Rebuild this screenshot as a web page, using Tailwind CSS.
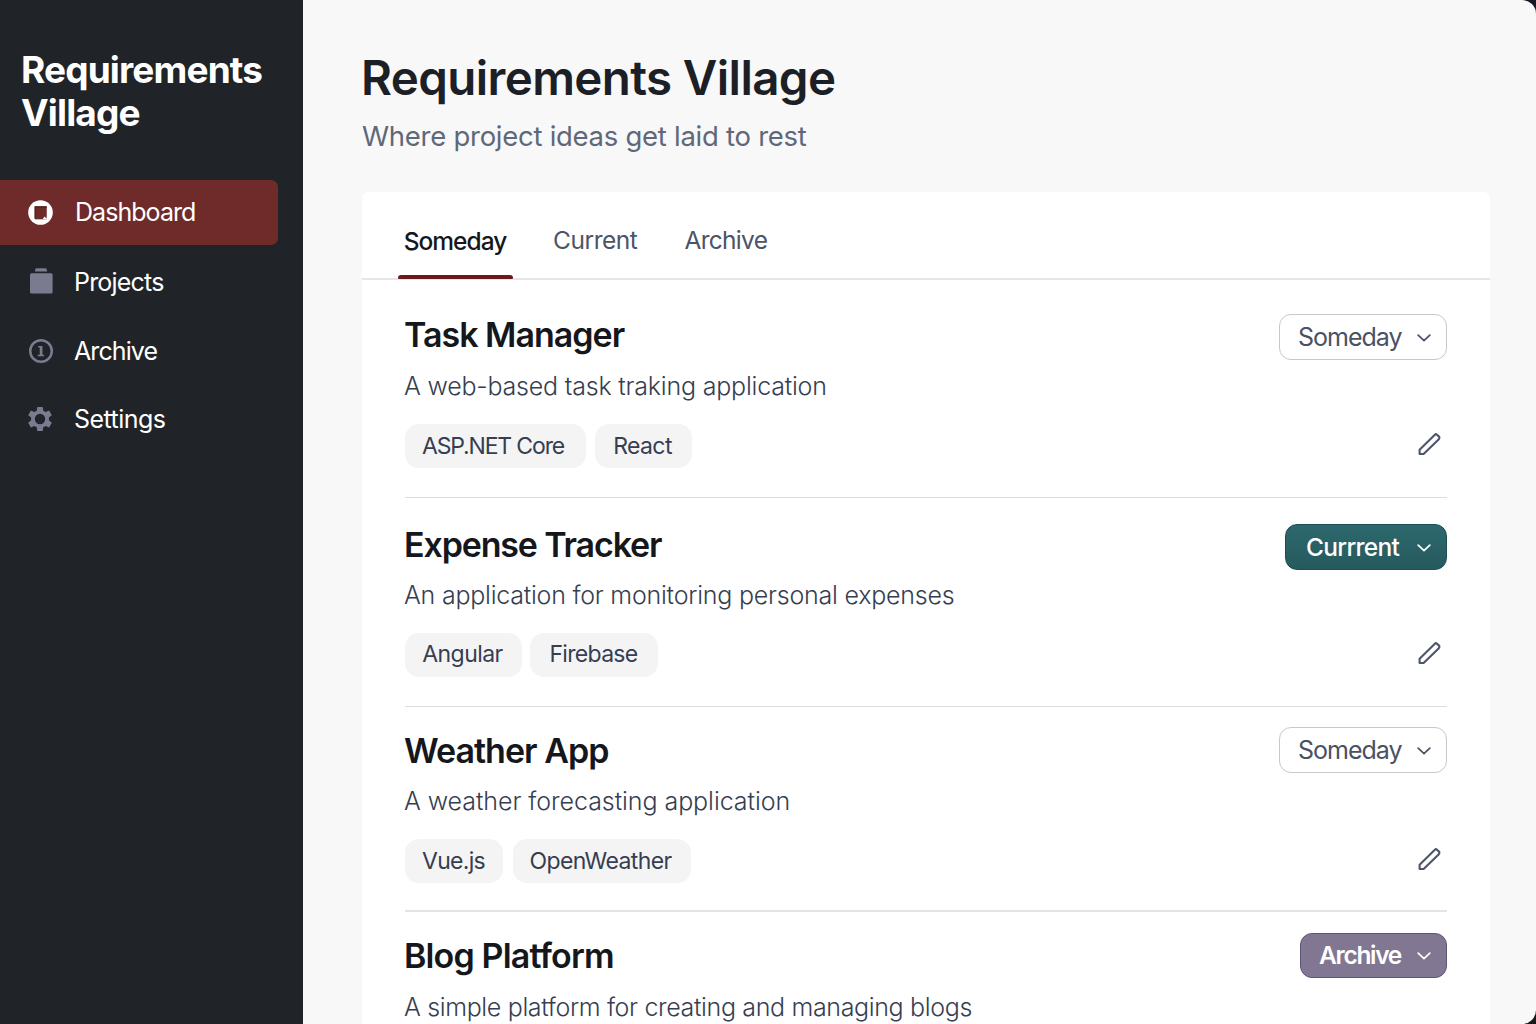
<!DOCTYPE html>
<html lang="en">
<head>
<meta charset="utf-8">
<title>Requirements Village</title>
<script src="https://cdn.jsdelivr.net/npm/@tailwindcss/browser@4"></script>
</head>
<body class="h-[1024px] w-[1536px] overflow-hidden bg-[#16191f] font-['Inter',sans-serif]">
<svg class="hidden">
  <symbol id="chevron" viewBox="0 0 14 8"><path d="M1.200 1.200 7 6.600l5.800-5.400" fill="none" stroke="currentColor" stroke-width="1.700" stroke-linecap="round" stroke-linejoin="round"/></symbol>
  <symbol id="pencil" viewBox="0 0 24 24"><path d="M2.600 22v-4.200L17.600 2.900l1.500-.9 3.200 2.900q.4 1.500-.7 2.600L6.600 22z" fill="none" stroke="currentColor" stroke-width="2.100" stroke-linejoin="round"/></symbol>
</svg>
<div class="flex h-full overflow-hidden">
  <aside class="flex h-full w-[303px] shrink-0 flex-col bg-[#202428] text-white">
    <div class="mt-[48px] ml-[21px] text-[37px] leading-[43px] font-[680] tracking-[-0.850px]">Requirements<br>Village</div>
    <nav class="mt-[46px] flex flex-col text-[25px]">
      <a class="flex h-[65px] w-[278px] items-center rounded-r-[7px] bg-[#6f2b2a] pl-[27px]">
        <svg class="mb-px ml-px size-[25px]" viewBox="0 0 26 26"><circle cx="13" cy="13" r="12.800" fill="#fff"/><path d="M7.300 6.700h12.200v13.400h-12.200z" fill="#6f2b2a"/><path d="M7.300 19.500V7.200h12.200" fill="none" stroke="#511a1b" stroke-width="1.200"/><path d="M15.800 20.100h3.700v-1.600h-1.500v-1.200h-1.200v1.200h-1z" fill="#fff"/></svg>
        <span class="ml-[22px] pt-px tracking-[-0.950px]">Dashboard</span>
      </a>
      <a class="mt-[2px] flex h-[70px] items-center pl-[27px]">
        <svg class="mb-[2px] size-[28px]" viewBox="0 0 28 28"><path d="M8 4.500V3.200q0-2 2-2h8q2 0 2 2v1.300z" fill="#7b7b8f"/><rect x="3" y="6.300" width="22.600" height="20.200" rx="1.500" fill="#7b7b8f"/></svg>
        <span class="ml-[19px] pt-[2px] tracking-[-0.800px]">Projects</span>
      </a>
      <a class="flex h-[68px] items-center pl-[27px]">
        <svg class="size-[28px]" viewBox="0 0 28 28" fill="none" stroke="#7b7b8f"><circle cx="14" cy="14" r="10.800" stroke-width="2.500"/><path d="M11.200 9.800h2.500M10.800 18.500h6.200" stroke-width="1.500"/><path d="M14.100 9v10" stroke-width="2.700"/></svg>
        <span class="ml-[19px] pt-[2px] tracking-[-0.900px]">Archive</span>
      </a>
      <a class="flex h-[68px] items-center pl-[27px]">
        <svg class="size-[26px]" viewBox="0 0 26 26"><path fill="#7b7b8f" fill-rule="evenodd" d="M10.300 1h5.400l.6 3.700 2.300 1.300 3.500-1.400 2.700 4.700-2.900 2.300v2.700l2.900 2.400-2.700 4.700-3.500-1.400-2.300 1.300-.6 3.700h-5.400l-.6-3.700-2.300-1.300-3.500 1.400-2.700-4.700 2.900-2.400v-2.700L1.200 9.300l2.700-4.700L7.400 6l2.300-1.300zM13 7.800a5.200 5.200 0 1 0 0 10.400 5.200 5.200 0 0 0 0-10.400z"/></svg>
        <span class="ml-[21px] pt-[2px] tracking-[-0.550px]">Settings</span>
      </a>
    </nav>
  </aside>
  <main class="flex h-full flex-1 flex-col rounded-r-[14px] bg-[#f8f8f8] pr-[46px] pl-[59px]">
    <h1 class="mt-[48px] -ml-px text-[47.500px] leading-[60px] font-[560] tracking-[-0.620px] text-[#1c1f25]">Requirements Village</h1>
    <p class="mt-[10px] text-[27.500px] leading-[37px] tracking-[-0.270px] text-[#5f6878]">Where project ideas get laid to rest</p>
    <section class="mt-[37px] flex-1 rounded-t-[6px] bg-white">
      <div class="flex h-[88px] items-stretch border-b-2 border-[#e6e6e8] pl-[36px] text-[24.500px]">
        <div class="flex w-[115px] flex-col justify-end">
          <span class="-ml-px pb-[16px] text-center leading-[36px] font-medium tracking-[-1px] text-[#15171c]">Someday</span>
          <span class="mb-[-1px] h-[4px] rounded-t-[3px] rounded-b-[1px] bg-[#6b1a1c]"></span>
        </div>
        <div class="ml-[40px] flex items-center pt-[11px] tracking-[-0.450px] text-[#4c5465]">Current</div>
        <div class="ml-[47px] flex items-center pt-[11px] tracking-[-0.700px] text-[#4c5465]">Archive</div>
      </div>
      <div class="flex flex-col pr-[43px] pl-[43px] text-[#363e51]">
        <article class="flex h-[218px] justify-between border-b border-[#dcdde0] pt-[33px]">
          <div>
            <h2 class="-ml-px text-[34px] leading-[44px] font-[560] tracking-[-1px] text-[#15171c]">Task Manager</h2>
            <p class="mt-[11px] -ml-px text-[25px] leading-[36px] font-[350] tracking-[-0.200px]">A web-based task traking application</p>
            <div class="mt-[20px] flex gap-[9px] text-[23px]">
              <span class="flex h-[44px] w-[181px] items-center justify-center rounded-[14px] bg-[#f4f4f5] pr-[5px] tracking-[-1.150px]">ASP.NET Core</span>
              <span class="flex h-[44px] w-[97px] items-center justify-center rounded-[14px] bg-[#f4f4f5] pr-[2px] tracking-[-0.600px]">React</span>
            </div>
          </div>
          <div class="flex flex-col items-end pt-px">
            <button class="flex h-[46px] w-[168px] items-center justify-between rounded-[12px] border border-[#c6c8ce] bg-white pt-px pr-[15px] pl-[18px] text-[25px] tracking-[-1px] text-[#4a5163]">Someday<svg class="h-[8px] w-[14px]"><use href="#chevron"/></svg></button>
            <svg class="mt-[72px] mr-[6px] size-[24px] text-[#4e566b]"><use href="#pencil"/></svg>
          </div>
        </article>
        <article class="flex h-[209px] justify-between border-b border-[#dcdde0] pt-[25px]">
          <div>
            <h2 class="-ml-px text-[34px] leading-[44px] font-[560] tracking-[-1.150px] text-[#15171c]">Expense Tracker</h2>
            <p class="mt-[10px] -ml-px text-[25px] leading-[36px] font-[350] tracking-[-0.230px]">An application for monitoring personal expenses</p>
            <div class="mt-[20px] flex gap-[8px] text-[23px]">
              <span class="flex h-[44px] w-[117px] items-center justify-center rounded-[14px] bg-[#f4f4f5] pr-[2px] pb-px tracking-[-0.550px]">Angular</span>
              <span class="flex h-[44px] w-[128px] items-center justify-center rounded-[14px] bg-[#f4f4f5] pr-px pb-px tracking-[-0.700px]">Firebase</span>
            </div>
          </div>
          <div class="flex flex-col items-end pt-px">
            <button class="flex h-[46px] w-[162px] items-center justify-between rounded-[12px] border border-[#1d4e52] bg-linear-to-b from-[#2c686d] to-[#265a5e] pt-px pr-[15px] pl-[20px] text-[24.500px] font-medium tracking-[-0.700px] text-white">Currrent<svg class="h-[8px] w-[14px]"><use href="#chevron"/></svg></button>
            <svg class="mt-[71px] mr-[6px] size-[24px] text-[#4e566b]"><use href="#pencil"/></svg>
          </div>
        </article>
        <article class="flex h-[205px] justify-between border-b-2 border-[#e4e4e6] pt-[20px]">
          <div class="pt-[2px]">
            <h2 class="-ml-px text-[34px] leading-[44px] font-[560] tracking-[-0.980px] text-[#15171c]">Weather App</h2>
            <p class="mt-[10px] -ml-px text-[25px] leading-[36px] font-[350] tracking-[-0.060px]">A weather forecasting application</p>
            <div class="mt-[20px] flex gap-[10px] text-[23px]">
              <span class="flex h-[44px] w-[98px] items-center justify-center rounded-[14px] bg-[#f4f4f5] pr-px tracking-[-0.700px]">Vue.js</span>
              <span class="flex h-[44px] w-[178px] items-center justify-center rounded-[14px] bg-[#f4f4f5] pr-[3px] tracking-[-0.600px]">OpenWeather</span>
            </div>
          </div>
          <div class="flex flex-col items-end">
            <button class="flex h-[46px] w-[168px] items-center justify-between rounded-[12px] border border-[#c6c8ce] bg-white pt-px pr-[15px] pl-[18px] text-[25px] tracking-[-1px] text-[#4a5163]">Someday<svg class="h-[8px] w-[14px]"><use href="#chevron"/></svg></button>
            <svg class="mt-[74px] mr-[6px] size-[24px] text-[#4e566b]"><use href="#pencil"/></svg>
          </div>
        </article>
        <article class="flex justify-between pt-[21px]">
          <div class="pt-px">
            <h2 class="-ml-px text-[34px] leading-[44px] font-[560] tracking-[-0.850px] text-[#15171c]">Blog Platform</h2>
            <p class="mt-[11px] -ml-px text-[25px] leading-[36px] font-[350] tracking-[-0.350px]">A simple platform for creating and managing blogs</p>
          </div>
          <button class="flex h-[45px] w-[147px] items-center justify-between rounded-[12px] border border-[#5f5478] bg-[#817793] pr-[15px] pl-[18px] text-[24.500px] font-semibold tracking-[-1.300px] text-white">Archive<svg class="h-[8px] w-[14px]"><use href="#chevron"/></svg></button>
        </article>
      </div>
    </section>
  </main>
</div>
</body>
</html>
